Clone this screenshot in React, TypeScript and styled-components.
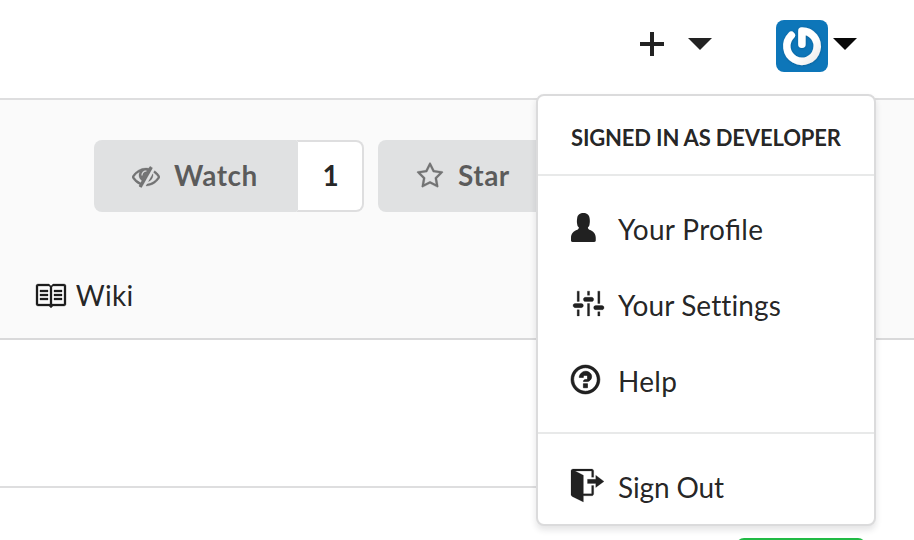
import React from 'react';
import styled, { createGlobalStyle } from 'styled-components';

const Global = createGlobalStyle`
  *, *::before, *::after { box-sizing: border-box; }
  body {
    margin: 0;
    background: #fff;
    color: rgba(0, 0, 0, 0.87);
    font-family: Lato, "Liberation Sans", sans-serif;
    font-size: 28px;
    overflow: hidden;
  }
`;

const Page = styled.div`
  position: relative;
  width: 914px;
  height: 540px;
  overflow: hidden;
`;

const Navbar = styled.header`
  display: flex;
  justify-content: flex-end;
  align-items: flex-start;
  height: 100px;
  padding: 20px 57px 0 0;
  border-bottom: 2px solid #dededf;
`;

const NavTrigger = styled.div<{ $gap: number; $active?: boolean }>`
  display: flex;
  gap: ${p => p.$gap}px;
  height: 52px;
  color: ${p => (p.$active ? '#080808' : '#222')};
  & + & { margin-left: 64px; }
`;

const Glyph = styled.svg`
  display: block;
  flex: none;
  fill: currentColor;
`;

const NavGlyph = styled(Glyph)`
  margin-top: 8px;
`;

const MenuGlyph = styled(Glyph)`
  margin: -5px 0 0 0.6px;
`;

const Avatar = styled.svg`
  display: block;
  width: 52px;
  height: 52px;
  border-radius: 8px;
`;

const RepoHeader = styled.section`
  height: 240px;
  padding: 40px 0 0 94px;
  background: #fafafa;
  border-bottom: 2px solid #d9d9da;
`;

const Actions = styled.div`
  display: flex;
  gap: 14px;
`;

const LabeledButton = styled.div`
  display: flex;
  height: 72px;
  font-weight: 700;
`;

const ActionButton = styled.button<{ $width: number }>`
  display: flex;
  align-items: center;
  gap: 14px;
  width: ${p => p.$width}px;
  padding: 0 0 2px 38px;
  border: 0;
  border-radius: 8px 0 0 8px;
  background: #e0e1e2;
  color: rgba(0, 0, 0, 0.6);
  font: inherit;
  letter-spacing: 0.5px;
  svg { opacity: 0.8; margin-top: 1px; }
`;

const Count = styled.a`
  display: flex;
  align-items: center;
  justify-content: center;
  width: 68px;
  padding: 0 0 2px 1px;
  border: 2px solid #dededf;
  border-left-color: #e0e1e2;
  border-radius: 0 8px 8px 0;
  background: #fff;
`;

const Tab = styled.a`
  display: flex;
  align-items: center;
  gap: 10px;
  height: 32px;
  margin: 68px 0 0 -60.2px;
  letter-spacing: 0.25px;
`;

const TabLabel = styled.span`
  padding-bottom: 2px;
`;

const Rule = styled.div`
  width: 560px;
  height: 148px;
  border-bottom: 2px solid #dededf;
`;

const GreenButton = styled.div`
  width: 130px;
  height: 72px;
  margin: 50px 0 0 736px;
  border-radius: 8px;
  background: #21ba45;
`;

const Menu = styled.nav`
  position: absolute;
  top: 94px;
  left: 536px;
  width: 340px;
  height: 432px;
  border: 2px solid #dbdbdc;
  border-radius: 8px;
  background: #fff;
  box-shadow: 0 4px 6px rgba(34, 36, 38, 0.12);
`;

const MenuHeader = styled.div`
  height: 80px;
  padding: 28px 0 0 33px;
  border-bottom: 2px solid #e8e9e9;
  font-size: 22px;
  font-weight: 700;
  line-height: 28px;
  letter-spacing: -0.17px;
  text-transform: uppercase;
  white-space: nowrap;
`;

const MenuGroup = styled.div<{ $divided?: boolean }>`
  padding: 16px 0 12px;
  border-bottom: ${p => (p.$divided ? '2px solid #e8e9e9' : '0')};
`;

const MenuItem = styled.a`
  display: grid;
  grid-template-columns: 48px 1fr;
  align-items: center;
  height: 76px;
  padding-left: 32px;
  white-space: nowrap;
`;

const ItemLabel = styled.span<{ $tracking: number; $ligatures?: boolean }>`
  padding-bottom: 2px;
  letter-spacing: ${p => p.$tracking}px;
  font-feature-settings: "liga" ${p => (p.$ligatures ? 1 : 0)};
`;

const paths = {
  person: 'M12 14.300c0 .5-.3.700-.7.700H.7c-.4 0-.7-.2-.7-.7V13c0-2 1.200-3.200 3.100-3.900.5-.2.700-.7.700-1.200-.5-.4-.8-.9-.8-1.600C2.800 5.500 2.800 4.700 3 3.400 3.200 1.900 4.400 1 6 1s2.800.9 3 2.400c.2 1.300.2 2.100 0 2.900 0 .7-.3 1.200-.8 1.600 0 .5.2 1 .7 1.200C10.800 9.800 12 11 12 13v1.300z',
  settings: 'M4 7H3V2h1v5zm-1 7h1v-3H3v3zm5 0h1V8H8v6zm5 0h1v-2h-1v2zm1-12h-1v6h1V2zM9 2H8v2h1V2zM5 8H2c-.55 0-1 .45-1 1s.45 1 1 1h3c.55 0 1-.45 1-1s-.45-1-1-1zm5-3H7c-.55 0-1 .45-1 1s.45 1 1 1h3c.55 0 1-.45 1-1s-.45-1-1-1zm5 4h-3c-.55 0-1 .45-1 1s.45 1 1 1h3c.55 0 1-.45 1-1s-.45-1-1-1z',
  question: 'M6 10h2v2H6v-2zm4-3.5C10 8.64 8 9 8 9H6c0-.55.45-1 1-1h.5c.28 0 .5-.22.5-.5v-1c0-.28-.22-.5-.5-.5h-1c-.28 0-.5.22-.5.5V7H4c0-1.5 1.5-3 3-3s3 1 3 2.5zM7 2.3c3.14 0 5.7 2.56 5.7 5.7s-2.56 5.7-5.7 5.7A5.71 5.71 0 0 1 1.3 8c0-3.14 2.56-5.7 5.7-5.7zM7 1C3.14 1 0 4.14 0 8s3.14 7 7 7 7-3.14 7-7-3.14-7-7-7z',
  signOut: 'M12 9V7H8V5h4V3l4 3-4 3zm-2 3H6V3L2 1h8v3h1V1c0-.55-.45-1-1-1H1C.45 0 0 .45 0 1v11.38c0 .39.22.73.55.91L6 16.01V13h4c.55 0 1-.45 1-1V8h-1v4z',
  book: 'M3 5h4v1H3V5zm0 3h4V7H3v1zm0 2h4V9H3v1zm11-5h-4v1h4V5zm0 2h-4v1h4V7zm0 2h-4v1h4V9zm2-6v9c0 .55-.45 1-1 1H9.5l-1 1-1-1H2c-.55 0-1-.45-1-1V3c0-.55.45-1 1-1h5.5l1 1 1-1H15c.55 0 1 .45 1 1zm-8 .5L7.500 3H2v9h6V3.500zm7-.5H9.500l-.5.5V12h6V3z',
  plus: 'M12 9H7v5H5V9H0V7h5V2h2v5h5v2z',
  caret: 'M0 5l6 6 6-6z',
  eyeSlash: 'M555 1335l78-141q-87-63-136-159t-49-203q0-121 61-225-229 117-381 353 167 258 427 375zm389-759q0-20-14-34t-34-14q-125 0-214.500 89.500t-89.500 214.500q0 20 14 34t34 14 34-14 14-34q0-86 61-147t147-61q20 0 34-14t14-34zm363-191q0 7-1 9-106 189-316 567t-315 566l-49 89q-10 16-28 16-12 0-134-70-16-10-16-28 0-12 44-87-143-65-263.500-173t-208.500-245q-20-31-20-69t20-69q153-235 380-371t496-136q89 0 180 17l54-97q10-16 28-16 5 0 18 6t31 15.500 33 18.500 31.500 18.500 19.500 11.500q16 10 16 27zm37 447q0 139-79 253.500t-209 164.500l280-502q8 45 8 84zm448 128q0 35-20 69-39 64-109 145-150 172-347.500 267t-419.500 95l74-132q212-18 392.500-137t301.500-307q-115-179-282-294l63-112q95 64 182.500 153t144.500 182q20 34 20 69z',
  star: 'M1201 1004l306-297-422-62-189-382-189 382-422 62 306 297-73 421 378-199 377 199zm527-357q0 22-26 48l-363 354 86 500q1 7 1 20 0 50-41 50-19 0-40-12l-449-236-449 236q-22 12-40 12-21 0-31.500-14.500t-10.500-35.500q0-6 2-20l86-500-364-354q-25-27-25-48 0-37 56-46l502-73 225-455q19-41 49-41t49 41l225 455 502 73q56 9 56 46z',
};

type OctName = 'person' | 'settings' | 'question' | 'signOut' | 'book' | 'plus' | 'caret';
const octWidth: Record<OctName, number> = {
  person: 13, settings: 16, question: 15, signOut: 16, book: 16, plus: 12, caret: 12,
};

interface OcticonProps {
  name: OctName;
  size?: number;
  weight?: number;
  as?: typeof Glyph;
}

function Octicon({ name, size = 33, weight = 0, as: As = Glyph }: OcticonProps) {
  const w = octWidth[name];
  return (
    <As width={(w * size) / 16} height={size} viewBox={`0 0 ${w} 16`} overflow="visible">
      <path d={paths[name]} stroke="currentColor" strokeWidth={weight} />
    </As>
  );
}

function SemanticIcon({ name }: { name: 'eyeSlash' | 'star' }) {
  return (
    <Glyph width={28} height={28} viewBox="0 0 1792 1792">
      <path d={paths[name]} stroke="currentColor" strokeWidth={20} />
    </Glyph>
  );
}

interface Item {
  icon: OctName;
  label: string;
  tracking: number;
  ligatures?: boolean;
  weight?: number;
}

const accountItems: Item[] = [
  { icon: 'person', label: 'Your Profile', tracking: 0.32, ligatures: true },
  { icon: 'settings', label: 'Your Settings', tracking: 0.1, weight: 0.15 },
  { icon: 'question', label: 'Help', tracking: 0.3, weight: 0.3 },
];

const signOutItem: Item = { icon: 'signOut', label: 'Sign Out', tracking: -0.15, weight: 0.1 };

function Entry({ item }: { item: Item }) {
  return (
    <MenuItem>
      <Octicon name={item.icon} weight={item.weight} as={MenuGlyph} />
      <ItemLabel $tracking={item.tracking} $ligatures={item.ligatures}>
        {item.label}
      </ItemLabel>
    </MenuItem>
  );
}

export default function App() {
  return (
    <>
      <Global />
      <Page>
        <Navbar>
          <NavTrigger $gap={24}>
            <Octicon name="plus" size={32} as={NavGlyph} />
            <Octicon name="caret" size={32} as={NavGlyph} />
          </NavTrigger>
          <NavTrigger $gap={5} $active>
            <Avatar viewBox="0 0 52 52">
              <defs>
                <linearGradient id="ring" x1="0" y1="0" x2="1" y2="1">
                  <stop offset="0.6" stopColor="#fff" />
                  <stop offset="1" stopColor="#ececec" />
                </linearGradient>
                <filter id="soft" x="-20%" y="-20%" width="140%" height="140%">
                  <feDropShadow dx="0.3" dy="0.4" stdDeviation="0.8" floodColor="#04406b" floodOpacity="0.5" />
                </filter>
              </defs>
              <rect width="52" height="52" fill="#0d76b9" />
              <path
                d="M15.300 15.300A15.200 15.200 0 1 0 25.900 10.900V24.300"
                fill="none"
                stroke="url(#ring)"
                strokeWidth="7.500"
                strokeLinecap="round"
                strokeLinejoin="round"
                filter="url(#soft)"
              />
            </Avatar>
            <Octicon name="caret" size={32} as={NavGlyph} />
          </NavTrigger>
        </Navbar>
        <RepoHeader>
          <Actions>
            <LabeledButton>
              <ActionButton $width={202}>
                <SemanticIcon name="eyeSlash" />
                Watch
              </ActionButton>
              <Count>1</Count>
            </LabeledButton>
            <LabeledButton>
              <ActionButton $width={174}>
                <SemanticIcon name="star" />
                Star
              </ActionButton>
            </LabeledButton>
          </Actions>
          <Tab>
            <Octicon name="book" size={32} weight={0.15} />
            <TabLabel>Wiki</TabLabel>
          </Tab>
        </RepoHeader>
        <Rule />
        <GreenButton />
        <Menu>
          <MenuHeader>Signed in as developer</MenuHeader>
          <MenuGroup $divided>
            {accountItems.map(item => (
              <Entry key={item.label} item={item} />
            ))}
          </MenuGroup>
          <MenuGroup>
            <Entry item={signOutItem} />
          </MenuGroup>
        </Menu>
      </Page>
    </>
  );
}
